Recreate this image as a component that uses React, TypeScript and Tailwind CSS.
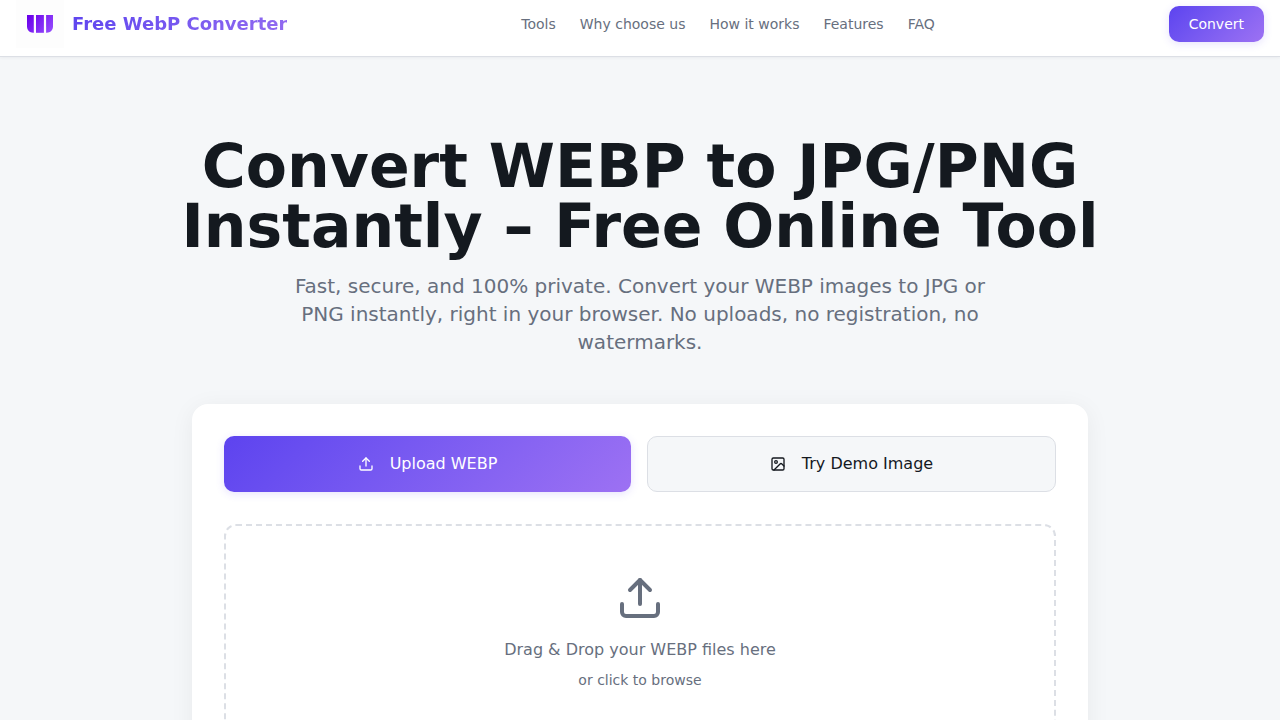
import React, { useRef, useState } from "react";
import { Image, Upload } from "lucide-react";

interface NavItem {
  label: string;
  href: string;
}

const navItems: NavItem[] = [
  { label: "Tools", href: "#tools" },
  { label: "Why choose us", href: "#why-choose-us" },
  { label: "How it works", href: "#how-it-works" },
  { label: "Features", href: "#features" },
  { label: "FAQ", href: "#faq" },
];

const Logo: React.FC = () => (
  <svg viewBox="0 0 48 48" className="size-12" aria-hidden="true">
    <defs>
      <linearGradient id="logo" x1="14" y1="14" x2="38" y2="34" gradientUnits="userSpaceOnUse">
        <stop stopColor="#6a00ea" />
        <stop offset="1" stopColor="#9a55ff" />
      </linearGradient>
    </defs>
    <rect width="48" height="48" fill="#fdfdfd" />
    <g fill="url(#logo)">
      <path d="M11 15h6.8v17.8h-.6C13.600 32.800 11 30.200 11 26.600z" />
      <path d="M20 15h7.900v17.800H20z" />
      <path d="M30.100 15H37v11.600c0 3.600-2.700 6.200-6.300 6.200h-.6z" />
    </g>
  </svg>
);

const Header: React.FC = () => (
  <header className="h-14 bg-white shadow-[0_1px_0_#dcdfe5,0_2px_3px_rgba(20,25,31,0.05)]">
    <div className="flex items-center justify-between px-4">
      <a href="#" className="flex items-center gap-2">
        <Logo />
        <span className="bg-linear-135 from-[#5d43ef] to-[#946bf0] bg-clip-text text-lg font-bold text-transparent">
          Free WebP Converter
        </span>
      </a>
      <nav className="flex items-center gap-6">
        {navItems.map((item) => (
          <a key={item.href} href={item.href} className="text-sm text-[#676f7e]">
            {item.label}
          </a>
        ))}
      </nav>
      <button className="h-9 rounded-[10px] bg-linear-135 from-[#5d43ef] to-[#9d71f3] px-5 text-sm text-white shadow-[0_2px_8px_rgba(93,67,239,0.15)]">
        Convert
      </button>
    </div>
  </header>
);

// Upload card
const Converter: React.FC = () => {
  const inputRef = useRef<HTMLInputElement>(null);
  const [files, setFiles] = useState<File[]>([]);

  const openPicker = () => inputRef.current?.click();

  const handleDrop = (e: React.DragEvent) => {
    e.preventDefault();
    setFiles(Array.from(e.dataTransfer.files));
  };

  return (
    <div className="mx-auto mt-12 max-w-4xl rounded-2xl bg-white p-8 shadow-[0_4px_24px_rgba(20,25,31,0.06)]">
      <div className="flex gap-4">
        <button
          onClick={openPicker}
          className="flex h-14 flex-1 items-center justify-center gap-4 rounded-[10px] bg-linear-135 from-[#5d43ef] to-[#9d71f3] px-8 text-white shadow-[0_2px_8px_rgba(93,67,239,0.15)]"
        >
          <Upload className="size-4" />
          Upload WEBP
        </button>
        <button className="flex h-14 flex-1 items-center justify-center gap-4 rounded-[10px] border border-[#dcdfe5] bg-[#f5f7f9] px-8 text-[#14191f]">
          <Image className="size-4" />
          Try Demo Image
        </button>
      </div>
      <label
        onDragOver={(e) => e.preventDefault()}
        onDrop={handleDrop}
        className="mt-8 flex cursor-pointer flex-col items-center rounded-xl border-2 border-dashed border-[#dcdfe5] p-12 text-[#676f7e]"
      >
        <Upload className="size-12" />
        <span className="mt-4">Drag &amp; Drop your WEBP files here</span>
        <span className="mt-2 text-sm">or click to browse</span>
        <input
          ref={inputRef}
          type="file"
          accept="image/webp"
          multiple
          className="hidden"
          onChange={(e) => setFiles(Array.from(e.target.files ?? []))}
        />
      </label>
      {files.length > 0 && (
        <ul className="mt-4 text-sm text-[#676f7e]">
          {files.map((file) => (
            <li key={file.name}>{file.name}</li>
          ))}
        </ul>
      )}
    </div>
  );
};

const App: React.FC = () => (
  <div className="min-h-screen bg-[#f5f7f9] font-['DejaVu_Sans',sans-serif] text-[#14191f]">
    <Header />
    <main className="px-4 py-20">
      <div className="text-center">
        <h1 className="mx-auto max-w-5xl text-6xl leading-none font-bold">
          Convert WEBP to JPG/PNG Instantly – Free Online Tool
        </h1>
        <p className="mx-auto mt-4 max-w-3xl px-8 text-xl text-[#676f7e]">
          Fast, secure, and 100% private. Convert your WEBP images to JPG or PNG
          instantly, right in your browser. No uploads, no registration, no
          watermarks.
        </p>
      </div>
      <Converter />
    </main>
  </div>
);

export default App;
